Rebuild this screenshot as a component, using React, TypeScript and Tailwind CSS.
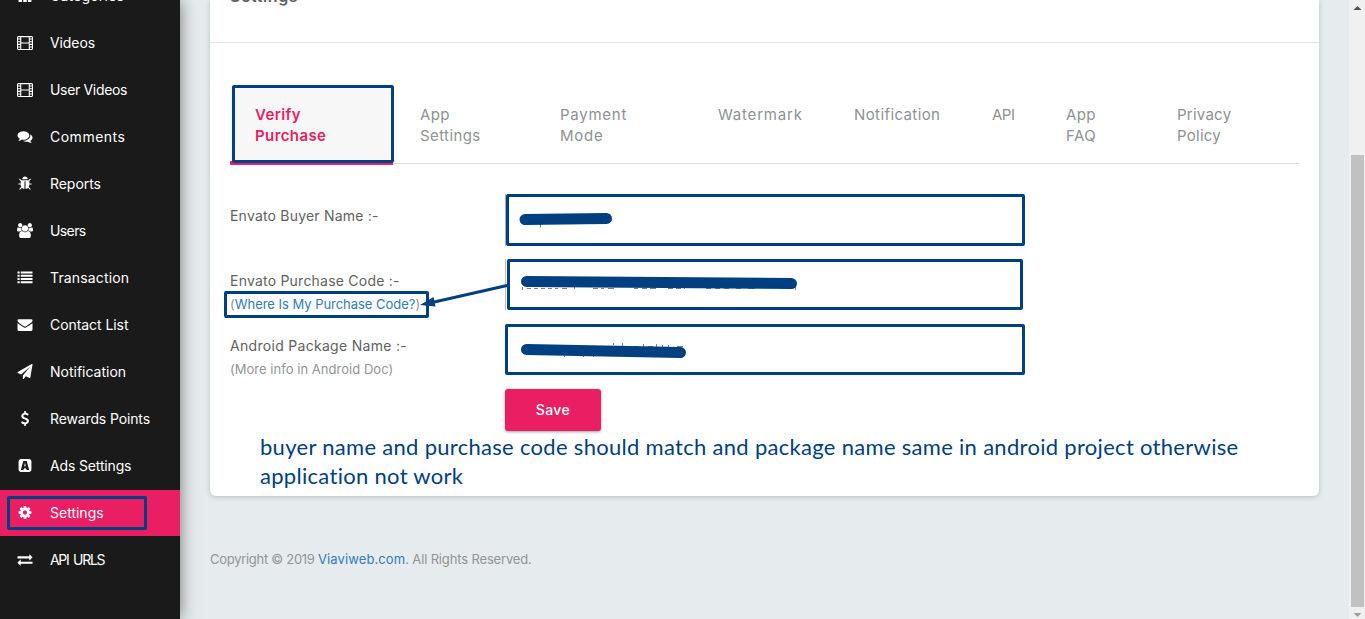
import React from "react";

type Icon = { d: string; w?: number; evenodd?: boolean };

const ICONS: Record<string, Icon> = {
  grid: { d: "M128 128h420v420h-420zM686 128h420v420h-420zM1244 128h420v420h-420zM128 686h420v420h-420zM686 686h420v420h-420zM1244 686h420v420h-420zM128 1244h420v420h-420zM686 1244h420v420h-420zM1244 1244h420v420h-420z" },
  film: {
    w: 1920,
    evenodd: true,
    d: "M160 128h1600q66 0 113 47t47 113v1344q0 66-47 113t-113 47h-1600q-66 0-113-47t-47-113v-1344q0-66 47-113t113-47zM128 288v128h256v-160h-256zM128 544v192h256v-192zM128 864v192h256v-192zM128 1184v192h256v-192zM128 1504v160h256v-160zM512 256v640h896v-640zM512 1024v640h896v-640zM1536 256v160h256v-160zM1536 544v192h256v-192zM1536 864v192h256v-192zM1536 1184v192h256v-192zM1536 1504v160h256v-160z",
  },
  comments: { d: "M1408 768q0 139-94 257t-256.5 186.5-353.5 68.5q-86 0-176-16-124 88-278 128-36 9-86 16h-3q-11 0-20.5-8t-11.5-21q-1-3-1-6.5t.5-6.5 2-6l2.5-5 3.5-5.5 4-5 4.5-5 4-4.5q5-6 23-25t26-29.5 22.5-29 25-38.5 20.5-44q-124-72-195-177t-71-224q0-139 94-257t256.5-186.5 353.5-68.5 353.5 68.5 256.5 186.5 94 257zm384 256q0 120-71 224.5t-195 176.5q10 24 20.5 44t25 38.5 22.5 29 26 29.5 23 25q1 1 4 4.5t4.5 5 4 5 3.5 5.5l2.5 5 2 6 .5 6.5-1 6.5q-3 14-13 22t-22 7q-50-7-86-16-154-40-278-128-90 16-176 16-271 0-472-132 58 4 88 4 161 0 309-45t264-129q125-92 192-212t67-254q0-77-23-152 129 71 204 178t75 230z" },
  bug: { d: "M1696 960q0 26-19 45t-45 19h-224q0 171-67 290l208 209q19 19 19 45t-19 45q-18 19-45 19t-45-19l-198-197q-5 5-15 13t-42 28.5-65 36.5-82 29-97 13v-896h-128v896q-51 0-101.5-13.5t-87-33-66-39-43.5-32.5l-15-14-183 207q-20 21-48 21-24 0-43-16-19-18-20.5-44.5t15.5-46.5l202-227q-58-114-58-274h-224q-26 0-45-19t-19-45 19-45 45-19h224v-294l-173-173q-19-19-19-45t19-45 45-19 45 19l173 173h844l173-173q19-19 45-19t45 19 19 45-19 45l-173 173v294h224q26 0 45 19t19 45zm-480-576h-640q0-133 93.5-226.5t226.5-93.5 226.5 93.5 93.5 226.5z" },
  users: { w: 1920, d: "M593 896q-162 5-265 128h-134q-82 0-138-40.5t-56-118.5q0-353 124-353 6 0 43.5 21t97.5 42.5 119 21.5q67 0 133-23-5 37-5 66 0 139 81 256zm1071 637q0 120-73 189.5t-194 69.5h-874q-121 0-194-69.5t-73-189.5q0-53 3.5-103.5t14-109 26.5-108.5 43-97.5 62-81 85.5-53.5 111.5-20q10 0 43 21.5t73 48 107 48 135 21.5 135-21.5 107-48 73-48 43-21.5q61 0 111.5 20t85.5 53.5 62 81 43 97.5 26.5 108.5 14 109 3.5 103.5zm-1024-1277q0 106-75 181t-181 75-181-75-75-181 75-181 181-75 181 75 75 181zm704 384q0 159-112.5 271.5t-271.5 112.5-271.5-112.5-112.5-271.5 112.5-271.5 271.5-112.5 271.5 112.5 112.5 271.5zm576 225q0 78-56 118.5t-138 40.5h-134q-103-123-265-128 81-117 81-256 0-29-5-66 66 23 133 23 59 0 119-21.5t97.5-42.5 43.5-21q124 0 124 353zm-128-609q0 106-75 181t-181 75-181-75-75-181 75-181 181-75 181 75 75 181z" },
  list: { d: "M0 192h256v224h-256zM384 192h1408v224h-1408zM0 576h256v224h-256zM384 576h1408v224h-1408zM0 960h256v224h-256zM384 960h1408v224h-1408zM0 1344h256v224h-256zM384 1344h1408v224h-1408z" },
  envelope: { d: "M1792 710v794q0 66-47 113t-113 47h-1472q-66 0-113-47t-47-113v-794q44 49 101 87 362 246 497 345 57 42 92.5 65.5t94.5 48 110 24.5h2q51 0 110-24.5t94.5-48 92.5-65.5q170-123 498-345 57-39 100-87zm0-294q0 79-49 151t-122 123q-376 261-468 325-10 7-42.5 31t-54 38.5-52 32.5-57.5 27-50 9h-2q-23 0-50-9t-57.5-27-52-32.5-54-38.5-42.5-31q-91-64-262-182.5t-205-142.5q-62-42-117-115.5t-55-136.5q0-78 41.5-130t118.5-52h1472q65 0 112.5 47t47.5 113z" },
  plane: { d: "M1764 11q33 24 27 64l-256 1536q-5 29-32 45-14 8-31 8-11 0-24-5l-453-185-242 295q-18 23-49 23-13 0-22-4-19-7-30.5-23.5t-11.5-36.5v-349l864-1059-1069 925-395-162q-37-14-40-55-2-40 32-59l1664-960q15-9 32-9 20 0 36 11z" },
  dollar: { d: "M1362 1185q0 153-99.5 263.5t-258.5 136.5v175q0 14-9 23t-23 9h-135q-13 0-22.5-9.5t-9.5-22.5v-175q-66-9-127.5-31t-101.5-44.5-74-48-46.5-37.5-17.5-18q-17-21-2-41l103-135q7-10 23-12 15-2 24 9l2 2q113 99 243 125 37 8 74 8 81 0 142.5-43t61.5-122q0-28-15-53t-33.5-42-58.5-37.5-66-32-80-32.5q-39-16-61.5-25t-61.5-26.5-62.5-31-56.5-35.5-53.5-42.5-43.5-49-35.5-58-21-66.5-8.5-78q0-138 98-242t255-134v-180q0-13 9.5-22.5t22.5-9.5h135q14 0 23 9t9 23v176q57 6 110.5 23t87 33.5 63.5 37.5 39 29 15 14q17 18 5 38l-81 146q-8 15-23 16-14 3-27-7-3-3-14.5-12t-39-26.5-58.5-32-74.5-26-85.5-11.5q-95 0-155 43t-60 111q0 26 8.5 48t29.5 41.5 39.5 33 56 31 60.5 27 70 27.5q53 20 81 31.5t76 35 75.5 42.5 62 50 53 63.5 31.5 76.5 13 94z" },
  ads: {
    evenodd: true,
    d: "M416 128h960q119 0 203.500 84.500t84.500 203.500v960q0 119-84.500 203.500t-203.500 84.500h-960q-119 0-203.500-84.500t-84.500-203.500v-960q0-119 84.500-203.500t203.500-84.500zM690 352l-290 1088h270l226-290 226 290h270l-290-1088zM896 560l100 440h-200z",
  },
  cog: { d: "M1152 896q0-106-75-181t-181-75-181 75-75 181 75 181 181 75 181-75 75-181zm512-109v222q0 12-8 23t-20 13l-185 28q-19 54-39 91 35 50 107 138 10 12 10 25t-9 23q-27 37-99 108t-94 71q-12 0-26-9l-138-108q-44 23-91 38-16 136-29 186-7 28-36 28h-222q-14 0-24.5-8.5t-11.5-21.5l-28-184q-49-16-90-37l-141 107q-10 9-25 9-14 0-25-11-126-114-165-168-7-10-7-23 0-12 8-23 15-21 51-66.5t54-70.5q-27-50-41-99l-183-27q-13-2-21-12.5t-8-23.5v-222q0-12 8-23t19-13l186-28q14-46 39-92-40-57-107-138-10-12-10-24 0-10 9-23 26-36 98.500-107.500t94.500-71.500q13 0 26 10l138 107q44-23 91-38 16-136 29-186 7-28 36-28h222q14 0 24.500 8.500t11.500 21.500l28 184q49 16 90 37l142-107q9-9 24-9 13 0 25 10 129 119 165 170 7 8 7 22 0 12-8 23-15 21-51 66.500t-54 70.500q26 50 41 98l183 28q13 2 21 12.500t8 23.500z" },
  exchange: { d: "M1792 1184v192q0 13-9.5 22.5t-22.5 9.5h-1376v192q0 13-9.5 22.5t-22.5 9.5q-12 0-24-10l-319-320q-9-9-9-22 0-14 9-23l320-320q9-9 23-9 13 0 22.5 9.5t9.5 22.5v192h1376q13 0 22.5 9.5t9.5 22.5zm0-544q0 14-9 23l-320 320q-9 9-23 9-13 0-22.5-9.500t-9.500-22.500v-192h-1376q-13 0-22.500-9.500t-9.500-22.500v-192q0-13 9.500-22.500t22.500-9.500h1376v-192q0-14 9-23t23-9q12 0 24 10l319 319q9 9 9 23z" },
};

const MENU = [
  { icon: "grid", label: "Categories", cls: "tracking-[0.2px]" },
  { icon: "film", label: "Videos", cls: "tracking-[-0.1px]" },
  { icon: "film", label: "User Videos", cls: "tracking-[-0.33px]" },
  { icon: "comments", label: "Comments", cls: "tracking-[0.5px]" },
  { icon: "bug", label: "Reports", cls: "tracking-[-0.05px]" },
  { icon: "users", label: "Users", cls: "tracking-[-0.6px]" },
  { icon: "list", label: "Transaction", cls: "tracking-[0.15px]" },
  { icon: "envelope", label: "Contact List", cls: "tracking-[-0.06px]" },
  { icon: "plane", label: "Notification", cls: "" },
  { icon: "dollar", label: "Rewards Points", cls: "tracking-[-0.13px]" },
  { icon: "ads", label: "Ads Settings", cls: "tracking-[-0.15px]" },
  { icon: "cog", label: "Settings", cls: "", active: true },
  { icon: "exchange", label: "API URLS", cls: "tracking-[-1.3px] [word-spacing:2px]" },
];

function MenuIcon({ name }: { name: string }) {
  const { d, w = 1792, evenodd } = ICONS[name];
  return (
    <svg viewBox={`0 0 ${w} 1792`} className="h-[15px] w-4" fill="currentColor">
      <path d={d} fillRule={evenodd ? "evenodd" : "nonzero"} />
    </svg>
  );
}

function Sidebar() {
  return (
    <aside className="z-10 h-full w-[180px] shrink-0 bg-[#1a1a1a] text-white shadow-[0_0_16px_rgba(0,0,0,0.5)]">
      <div className="h-full overflow-hidden">
        <nav className="-mt-[27px] flex flex-col gap-px">
          {MENU.map((m) => (
            <a key={m.label} className={`flex h-[46px] shrink-0 items-center ${m.active ? "bg-[#e91e63]" : ""}`}>
              <span
                className={
                  m.active
                    ? "ml-[7px] flex h-[34px] w-[140px] items-center rounded-xs border-3 border-[#004080] pl-[5px]"
                    : "flex items-center pl-[15px]"
                }
              >
                <span className="flex w-5 justify-center pb-px">
                  <MenuIcon name={m.icon} />
                </span>
                <span className={`pl-[15px] text-sm whitespace-nowrap ${m.cls}`}>{m.label}</span>
              </span>
            </a>
          ))}
        </nav>
      </div>
    </aside>
  );
}

const TABS = [
  { lines: ["App", "Settings"], cls: "w-[140px] tracking-[0.4px]" },
  { lines: ["Payment", "Mode"], cls: "w-[158px] tracking-[0.75px]" },
  { lines: ["Watermark"], cls: "w-[136px] tracking-[0.8px]" },
  { lines: ["Notification"], cls: "w-[138px] tracking-[0.4px]" },
  { lines: ["API"], cls: "w-[74px] tracking-[-0.5px]" },
  { lines: ["App", "FAQ"], cls: "w-[111px] tracking-[0.4px]" },
  { lines: ["Privacy", "Policy"], cls: "w-[100px] tracking-[0.25px]" },
];

function Tabs() {
  return (
    <div className="mx-5 mt-[42px] flex h-[79px] w-[1069px] border-b border-[#dcdfe0] text-[15px] leading-[21px] text-[#8d9293]">
      <div className="relative h-[80px] w-[190px] shrink-0">
        <div className="h-[80px] w-[163px] border-b-4 border-[#e91e63] bg-[#f7f7f7] pt-[19px] pl-[25px] font-semibold tracking-[0.4px] text-[#e91e63]">
          Verify
          <br />
          Purchase
        </div>
        <div className="absolute top-0 left-[2px] h-[78px] w-[162px] rounded-xs border-3 border-[#004080]" />
      </div>
      {TABS.map((t) => (
        <div key={t.lines.join(" ")} className={`shrink-0 pt-[19px] ${t.cls}`}>
          {t.lines.map((l) => (
            <div key={l}>{l}</div>
          ))}
        </div>
      ))}
    </div>
  );
}

function Form() {
  return (
    <div className="mt-[30px] flex flex-col pl-5 text-sm text-[#5f6162]">
      <div className="flex h-[65px]">
        <div className="w-[275px] pt-[11px] leading-[22px] tracking-[0.2px]">Envato Buyer Name :-</div>
        <div className="h-[52px] w-[520px] border-l border-[#a5b3c0]">
          <div className="h-[52px] w-[519px] rounded-xs border-3 border-[#004080] bg-white" />
        </div>
      </div>
      <div className="flex h-[65px]">
        <div className="w-[275px] pt-[11px] leading-[22px] tracking-[0.22px]">
          Envato Purchase Code :-
          <div className="-mt-px -ml-[6px] flex h-[27px] w-[205px] items-center rounded-xs border-3 border-[#004080] pb-[2px] pl-[3px] text-[13px] tracking-[-0.03px] whitespace-nowrap text-[#919596]">
            (<a className="text-[#337ab7]">Where Is My Purchase Code?</a>)
          </div>
        </div>
        <div className="h-[51px] w-[518px] border-l border-[#b9bec2] pl-px">
          <div className="h-[51px] w-[516px] rounded-xs border-3 border-[#004080] bg-white" />
        </div>
      </div>
      <div className="flex h-[65px]">
        <div className="w-[275px] pt-[11px] leading-[22px] tracking-[0.3px]">
          Android Package Name :-
          <div className="mt-px text-[13px] leading-[22px] tracking-[0.03px] text-[#919596]">(More info in Android Doc)</div>
        </div>
        <div className="h-[51px] w-[520px] rounded-xs border-3 border-[#004080] bg-white" />
      </div>
      <button className="ml-[275px] h-[42px] w-24 rounded-[3px] bg-[#e91e63] text-sm font-medium tracking-[0.4px] text-white shadow-[0_1px_3px_rgba(0,50,70,0.45)]">
        Save
      </button>
    </div>
  );
}

function Annotations() {
  return (
    <svg className="pointer-events-none absolute top-0 left-0 z-20" width="1365" height="619" viewBox="0 0 1365 619" fill="none">
      <g stroke="#7b7f86" strokeWidth="1">
        <path d="M540.500 224v3.500" />
        <path d="M522.500 287v3M527 288.500h4M534 288.500h4M541 288.500h4M548 288.500h4M555 288.500h3M562 288.500h5M574.500 287v2M593 288.500h5M601 288.500h3M608 288.500h6M634 288.500h4M642 288.500h5M650 288.500h6M668 288.500h5M676 288.500h5M684.500 287v2M706 288.500h5M715 288.500h5M724 288.500h5M736 288.500h5M748 288.500h7M795.500 287v3" />
        <path d="M564.500 353v4M583.500 353v4M593.500 353v4M613.500 343v2M622.500 343v4M634 346.500h5M643.500 344v3M648 346.500h5M656.500 344v3M662.500 345v2M668.500 345v2M677 346.500h6" />
      </g>
      <g stroke="#004080" strokeWidth="11" strokeLinecap="round">
        <path d="M525 219.500L606.500 218.500" />
        <path d="M526.500 281.500L791.500 283.500" />
        <path d="M526.500 349.500L680.500 352.500" />
      </g>
      <path d="M507 285.500L432 302.500" stroke="#004080" strokeWidth="3" />
      <path d="M420 305L433.500 297L435.500 306.500Z" fill="#004080" />
    </svg>
  );
}

function Scrollbar() {
  return (
    <div className="flex h-full w-4 shrink-0 flex-col items-center bg-[#f0f0f0]">
      <svg width="16" height="17" viewBox="0 0 16 17">
        <path d="M4.500 10L8.500 6L12.500 10Z" fill="#505050" />
      </svg>
      <div className="ml-px mt-[138px] h-[452px] w-[13px] bg-[#c1c1c1]" />
      <svg width="16" height="12" viewBox="0 0 16 12">
        <path d="M4.500 6L12.500 6L8.500 10Z" fill="#a0a0a0" />
      </svg>
    </div>
  );
}

export default function App() {
  return (
    <div className="relative flex h-[619px] w-[1365px] overflow-hidden bg-[#e6ebed] font-['Inter',sans-serif]">
      <Sidebar />
      <main className="flex min-w-0 flex-1 flex-col pl-[30px]">
        <section className="h-[496px] w-[1109px] shrink-0 rounded-b-[6px] bg-white shadow-[0_1px_5px_rgba(40,60,60,0.25)]">
          <div className="h-[43px] overflow-hidden border-b border-[#dfe6e8] pl-5">
            <h1 className="-mt-[16px] text-base leading-[24px] font-semibold tracking-[0.6px] text-[#5f6162]">Settings</h1>
          </div>
          <Tabs />
          <Form />
          <p className="mt-px pl-[50px] font-['Lato',sans-serif] text-[22px] leading-[29px] tracking-[0.3px] whitespace-nowrap text-[#004080]">
            buyer name and purchase code should match and package name same in android project otherwise
            <br />
            application not work
          </p>
        </section>
        <footer className="mt-[53px] text-[13px] leading-[20px] text-[#919596]">
          <span className="tracking-[-0.28px]">Copyright © 2019 </span>
          <a className="tracking-[0.1px] text-[#337ab7]">Viaviweb.com</a>
          <span className="tracking-[-0.15px]">. All Rights Reserved.</span>
        </footer>
      </main>
      <Scrollbar />
      <Annotations />
    </div>
  );
}
